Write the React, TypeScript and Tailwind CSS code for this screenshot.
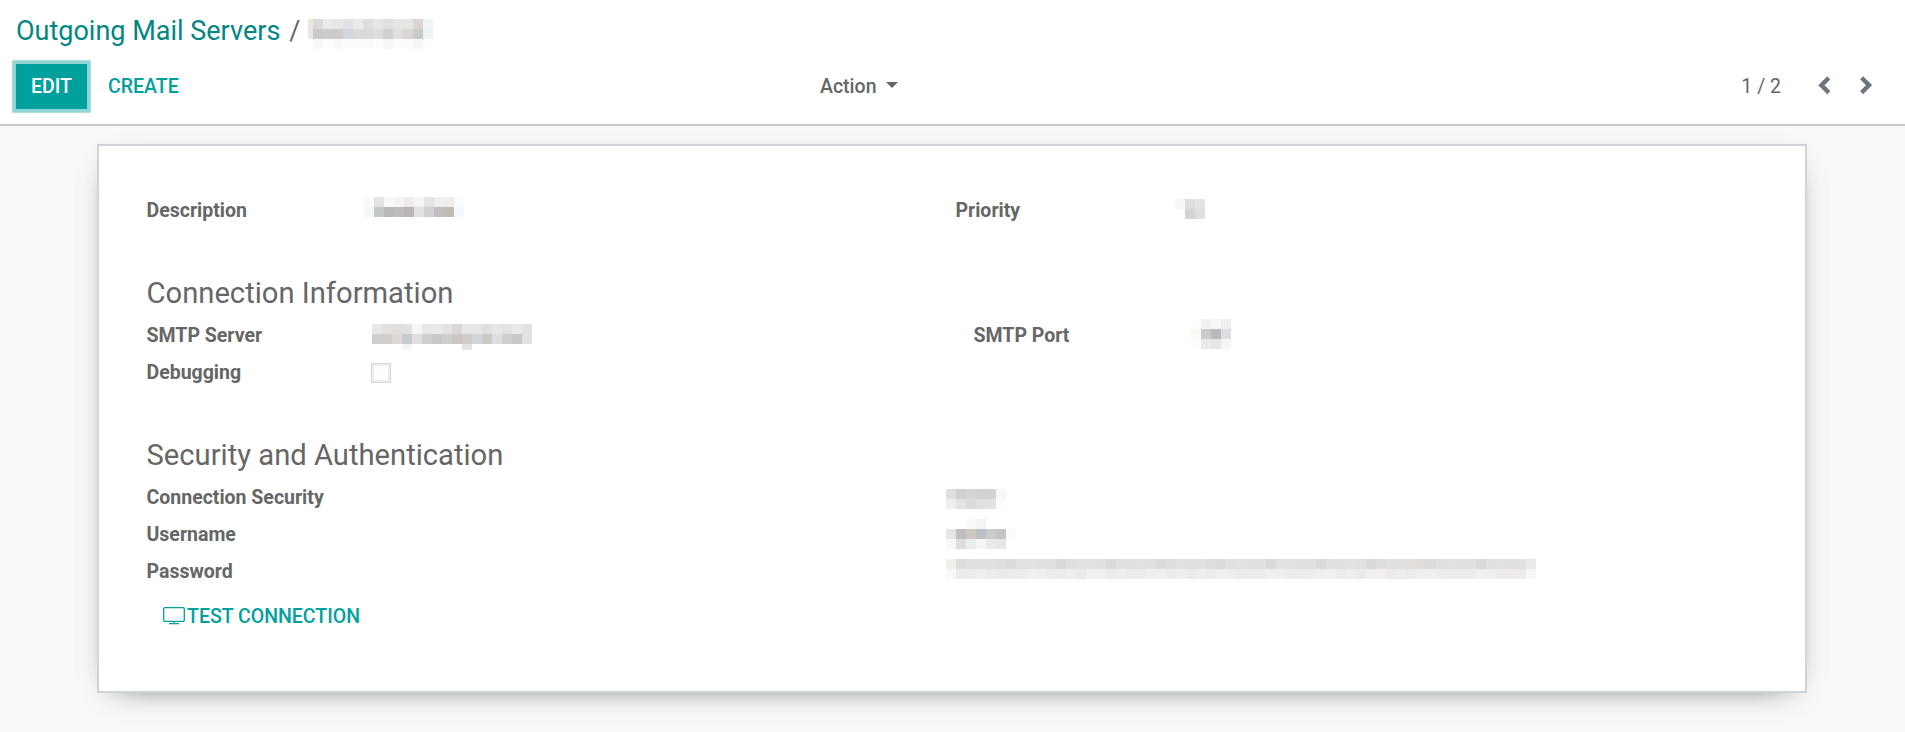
import React from "react";

type MosaicProps = { rows: string[]; heights?: number[]; first?: number; last?: number; className?: string };

/** Pixelated strip that hides a private value; each row lists its cell colours. */
function Mosaic({ rows, heights = [], first = 10, last = 10, className = "" }: MosaicProps) {
  const cells = rows.map((r) => r.split(" "));
  const count = cells[0].length;
  const width = first + (count - 2) * 10 + last;
  const hs = rows.map((_, i) => heights[i] ?? 10);
  const height = hs.reduce((a, b) => a + b, 0);
  return (
    <svg width={width} height={height} shapeRendering="crispEdges" className={`block shrink-0 ${className}`} aria-hidden="true">
      {cells.map((row, y) =>
        row.map((c, x) =>
          c === "-" ? null : (
            <rect
              key={`${x}-${y}`}
              x={x === 0 ? 0 : first + (x - 1) * 10}
              y={hs.slice(0, y).reduce((a, b) => a + b, 0)}
              width={x === 0 ? first : x === count - 1 ? last : 10}
              height={hs[y]}
              fill={`#${c}`}
            />
          ),
        ),
      )}
    </svg>
  );
}

const PASSWORD = [
  "f0efeb dcddde dfdfdf e0e0e0 e0e0e0 dfdddb dadbdd e1e1e1 e1e1e1 e0e0e0 e0e0de d9d9d9 dee0df dfe1e3 e1e1e0 e0e0df dbd9da dee1e0 e0e0e0 e1e1df e0e0e0 dddbda dcdee0 e1e1e1 e0e0e0 e0e0e0 dfdddb dadbdd e0e0e0 e1e1e1 e0e0df e0e0de d9d9db e1e1e1 dfe1e3 e0e0de e0e0de d9d9d9 dee0df dfe1e0 e1e1e0 e0e0de dbdad9 dcdee0 e0e0e0 e0e0e0 e0e0e0 dfdcda dadcde e0e0e0 e0e2e1 e0e0e0 e0e0df d9d9db e0e0e0 dfe1e3 e0e0de e0e0de e9eaeb",
  "f8f8f6 edebea ebecee efefef eeecea ebebed eeebe9 ebecee f0f0f0 efefef eeedeb ebecec eeeeee ebebeb f0f1f1 f0f0ee ececec efeeec ebecec ececee eeeff1 eeeff1 eeebea eeefee ebebeb efeeec ececee f0f0f0 eeeeec ebebed edebe9 ebecee f0f0f0 f0efee ebebeb eeebea ebedee eef0ef f0f0ee ebebeb eeeeee ebebeb eeeff1 f0f0f1 eeebea ecedec ebebeb eeeff1 efeff0 eeedeb ebecee eeebe9 ececee f0f0ef efefed ebebeb edeae8 eaebed f6f7f6",
];

function Field({ label, offset, children }: { label: string; offset: string; children?: React.ReactNode }) {
  return (
    <div className="flex h-[37px]">
      <div className={`${offset} shrink-0 leading-[37px] font-bold`}><span className="-ml-[0.5px]">{label}</span></div>
      {children}
    </div>
  );
}

export default function App() {
  return (
    <div className="flex h-[732px] w-full flex-col overflow-hidden bg-[#f9f9f9] font-[Roboto,sans-serif] text-[19.5px] text-[#666666]">
      <header className="h-[126px] shrink-0 border-b-2 border-[#cacaca] bg-white pl-4">
        <div className="flex h-[60px] text-[27px] leading-[63px]">
          <a className="text-[#008784]">Outgoing Mail Servers</a>
          <span className="ml-[9px] w-[19px]">/</span>
          <Mosaic
            first={5}
            className="mt-[19px]"
            rows={[
              "ece5de d8dadb eaecea e7e7e7 e1e2e5 ebebeb dddee0 e8e6e4 dee0e3 e6e4e4 e5e7e5 dad5d1 f0f4f9",
              "e9e6e4 cccac9 cacbcd cfcac7 d3d6de dbdbda dadada dfdedc d0d0d1 dee0df d9d5d1 cacaca eef3f8",
              "- f8f8f8 fcfdfc f9f9f9 fbfcfc fbfbfb fbfbfb fdfdfd f7f7f7 fcfcfc fcfcfc f7f7f5 fdfefe",
            ]}
          />
        </div>
        <div className="grid grid-cols-[804px_1fr_auto] items-start leading-[45px]">
          <div className="flex pt-1">
            <button className="h-[45px] w-[71px] bg-[#00a09d] font-medium text-white shadow-[0_0_0_3.75px_rgba(0,160,157,0.43)]">EDIT</button>
            <button className="ml-[21px] font-medium text-[#00a09d]">CREATE</button>
          </div>
          <button className="flex pt-1 font-medium">
            Action
            <svg width="12" height="6" className="mt-[18px] ml-[9px]" fill="currentColor"><path d="M0 0h12L6 6z" /></svg>
          </button>
          <div className="flex pt-1 pr-[33px]">
            <span>1 / 2</span>
            <svg width="12" height="19" viewBox="0 0 12 19" className="mt-3 ml-[37px]" fill="none" stroke="#6c757d" strokeWidth="4.4"><path d="M10.8 1.8 3.4 9.2l7.4 7.4" /></svg>
            <svg width="12" height="19" viewBox="0 0 12 19" className="mt-3 ml-[30px]" fill="none" stroke="#6c757d" strokeWidth="4.4"><path d="M1.6 1.8 9 9.2l-7.4 7.4" /></svg>
          </div>
        </div>
      </header>

      <main className="mt-[18px] ml-[97px] h-[549px] w-[1710px] border-2 border-[#ced4da] bg-white pt-[46px] pl-12 shadow-[0_8px_30px_-22px_rgba(0,0,0,0.85),0_9px_32px_-8px_rgba(0,0,0,0.1)]">
        <div className="grid grid-cols-[809px_1fr]">
          <Field label="Description" offset="w-[217px]">
            <Mosaic className="mt-[5px]" rows={["fafaf9 e2e4e5 f8f8f8 f4f4f5 efebea f4f5f5 e3e4e6 efefef efecea f8fcff", "f6f6f2 c5c8c8 bababa bebcbc bbb4b2 dfe1e4 cfd0d2 bebebf c0bcb4 f3f9ff"]} />
          </Field>
          <Field label="Priority" offset="w-[219px]">
            <Mosaic className="mt-[7px]" rows={["f7f7f7 dedede e4e4e6", "- d5d3d1 dfdfe1"]} />
          </Field>
        </div>

        <h2 className="mt-[46px] -ml-[0.5px] mb-[6px] text-[29.2px] leading-9">Connection Information</h2>
        <div className="grid grid-cols-[827px_1fr]">
          <Field label="SMTP Server" offset="w-[225px]">
            <Mosaic className="mt-[7px]" heights={[10, 10, 6]} rows={["e8e8e8 e1e1e1 e0dfdb e1e2e4 f4f6f8 e8e8e8 e9e9e9 e3e3e3 dcd7d6 e5e8e7 e4e6e8 e1e0de e4e7e5 e3e3e3 e9e9e9 e1e3e3", "cfcfcf cfcfcf ded9d4 c7cbce dfe1e0 cfcfcf c8c8c8 cecece cbc6c3 cfccc7 cfd5da c9c9c8 dcdfdd cfcfce c9c8c7 e1e3e3", "- - - f4f4f4 - - - - - e4e4e4 - - - - - -"]} />
          </Field>
          <Field label="SMTP Port" offset="w-[217px]">
            <Mosaic className="mt-[2px]" rows={["fdfdfb f2f2f2 f7f7f7 efefef", "fbfaf5 cbccce b9bac0 dedede", "fcfcfc e9e9ea e6e6e8 f6f6f6"]} />
          </Field>
        </div>
        <Field label="Debugging" offset="w-[224px]">
          <div className="mt-[9px] size-5 border border-[#d6d8d7] bg-[#fcfffe] shadow-[inset_0_0_0_2px_#ebecec]" />
        </Field>

        <h2 className="mt-[46px] -ml-[0.5px] mb-[6px] text-[29.2px] leading-9">Security and Authentication</h2>
        <Field label="Connection Security" offset="w-[799px]">
          <Mosaic className="mt-[10px]" rows={["dfdfdd cfd0d1 d5d5d5 d3d2cf d3d3d1 f4f8fc", "efefef e3e3e3 dbdbdb e3e1e0 e1e3e2 fcfdff"]} />
        </Field>
        <Field label="Username" offset="w-[799px]">
          <Mosaic className="mt-[3px]" rows={["- - fbfaf8 f2f5f8 - - -", "e6e5e3 bec0bf ccc7c2 bac0c6 cacac7 c4c5c8 fafcff", "f8f8f5 dddddd ececec f5f5f5 eaeaea e7e7e7 -"]} />
        </Field>
        <Field label="Password" offset="w-[799px]">
          <Mosaic className="mt-[6px]" rows={PASSWORD} />
        </Field>
        <button className="mt-2 ml-4 flex font-medium leading-[37px] text-[#00a09d]">
          <svg width="22" height="18" viewBox="0 0 22 18" className="mt-[9px] mr-[2px]" fill="none" stroke="currentColor" strokeWidth="1.3"><rect x=".7" y=".7" width="20.6" height="13.6" rx="1" /><path d="M11 14.3v2.2M6 16.6h10" /></svg>
          TEST CONNECTION
        </button>
      </main>
    </div>
  );
}
